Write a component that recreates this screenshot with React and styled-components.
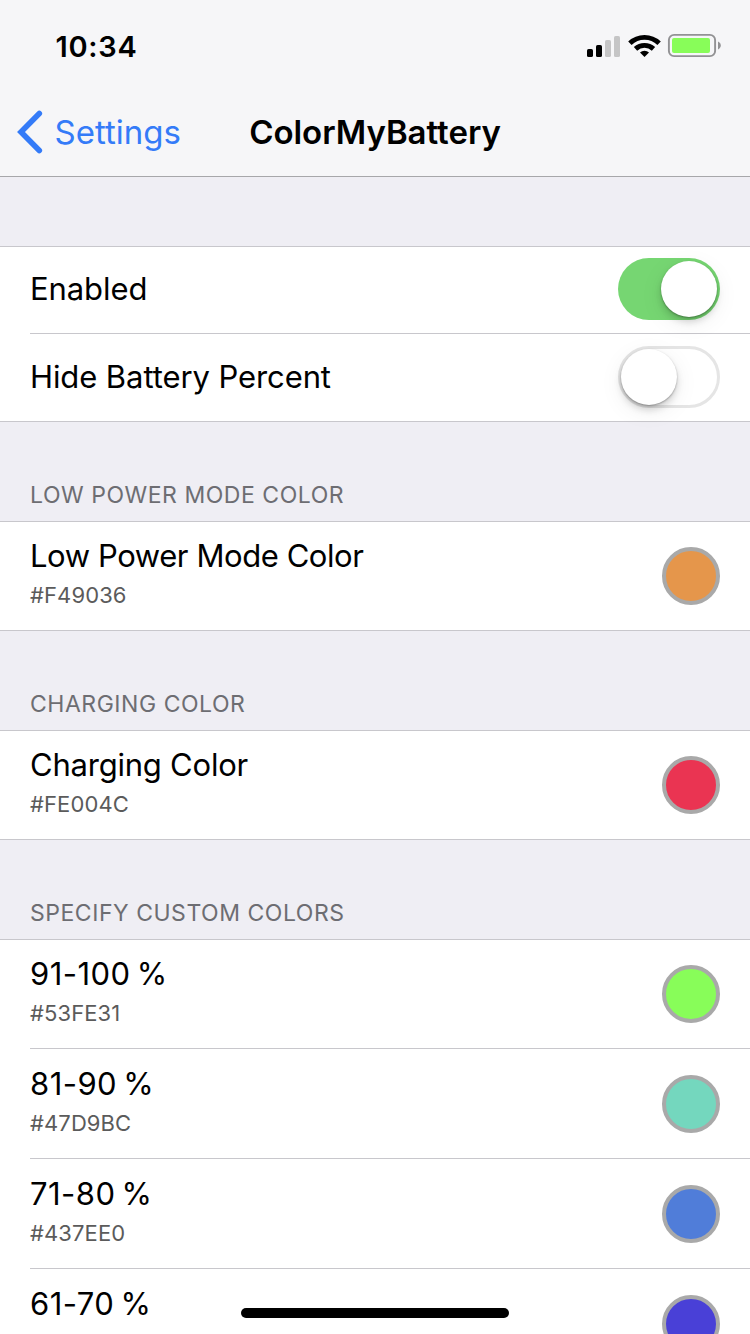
import React from "react";
import styled, { createGlobalStyle } from "styled-components";

const GlobalStyle = createGlobalStyle`
  *, *::before, *::after { box-sizing: border-box; }
  body {
    margin: 0;
    background: #efeef4;
    font-family: Inter, "Liberation Sans", sans-serif;
    color: #000;
  }
`;

const Screen = styled.main`
  position: relative;
  width: 750px;
  height: 1334px;
  overflow: hidden;
  background: #efeef4;
`;

const Header = styled.header`
  height: 177px;
  background: #f6f6f8;
  border-bottom: 1px solid #a7a7aa;
`;

const StatusBar = styled.div`
  display: flex;
  justify-content: space-between;
  height: 88px;
  padding: 0 28px 0 55.5px;
`;

const Clock = styled.time`
  padding-top: 29px;
  font-size: 29px;
  line-height: 36px;
  font-weight: 600;
  letter-spacing: 0.7px;
`;

const StatusIcons = styled.svg`
  width: 136px;
  height: 26px;
  margin-top: 33px;
`;

const NavBar = styled.nav`
  display: grid;
  grid-template-columns: 250px 250px 250px;
  height: 88px;
  align-items: center;
`;

const BackButton = styled.a`
  display: flex;
  align-items: center;
  padding-left: 17px;
  color: #347bf8;
  font-size: 33px;
  line-height: 40px;
  letter-spacing: 0;

  svg {
    width: 26px;
    height: 44px;
    margin-right: 11.5px;
  }
`;

const Title = styled.h1`
  justify-self: center;
  margin: 0;
  font-size: 33px;
  line-height: 40px;
  font-weight: 600;
  letter-spacing: -0.03px;
  white-space: nowrap;
`;

const SectionHeader = styled.h2`
  display: flex;
  align-items: flex-end;
  height: ${(p) => p.$height}px;
  margin: 0;
  padding: 0 30px 11px;
  font-size: 23px;
  line-height: 30px;
  font-weight: 400;
  letter-spacing: 0.53px;
  color: #6d6d72;
`;

const Group = styled.section`
  background: #fff;
  border-top: 1px solid #c8c7cc;
  border-bottom: 1px solid #c8c7cc;
`;

const Row = styled.div`
  display: flex;
  justify-content: space-between;
  height: ${(p) => p.$height}px;
  margin-left: 30px;
  padding-right: 30px;

  & + & { border-top: 1px solid #c8c7cc; }
`;

const SwitchRow = styled(Row)`
  align-items: center;
  padding-bottom: 2px;

  & + & { padding-bottom: 1px; }
`;

const ColorRow = styled(Row)`
  padding-top: 14px;

  & + & { padding-top: 15px; }
`;

const Label = styled.div`
  font-size: 31px;
  line-height: 40px;
  letter-spacing: ${(p) => p.$tracking ?? 0}px;
  word-spacing: ${(p) => p.$wordGap ?? 0}px;
  white-space: nowrap;
`;

const Hex = styled.div`
  margin-top: 4px;
  font-size: 22px;
  line-height: 30px;
  letter-spacing: 0.1px;
  color: #5b5b5b;
`;

const Swatch = styled.span`
  width: 58px;
  height: 58px;
  margin-top: 11px;
  border: 4px solid #a9a9a9;
  border-radius: 50%;
  background: ${(p) => p.$color};
`;

const Switch = styled.span`
  display: flex;
  justify-content: ${(p) => (p.$on ? "flex-end" : "flex-start")};
  width: 102px;
  height: 62px;
  padding: ${(p) => (p.$on ? "3px" : "0")};
  border: ${(p) => (p.$on ? "0" : "3px solid #e5e5e5")};
  border-radius: 31px;
  background: ${(p) => (p.$on ? "#76d672" : "#fff")};
`;

const Knob = styled.span`
  width: 56px;
  height: 56px;
  border-radius: 50%;
  background: #fff;
  box-shadow: 0 1px 2px rgba(0, 0, 0, 0.3), 0 5px 7px rgba(0, 0, 0, 0.15),
    0 6px 24px rgba(0, 0, 0, 0.07);
`;

const HomeIndicator = styled.div`
  position: absolute;
  left: 241px;
  bottom: 16px;
  width: 268px;
  height: 10px;
  border-radius: 5px;
  background: #000;
`;

const customColors = [
  { label: "91-100 %", hex: "#53FE31", color: "#88fd59" },
  { label: "81-90 %", hex: "#47D9BC", color: "#74d7be" },
  { label: "71-80 %", hex: "#437EE0", color: "#507dd9" },
  { label: "61-70 %", color: "#4940d7" },
];

function ColorSetting({ label, hex, color, height, tracking, wordGap }) {
  return (
    <ColorRow $height={height}>
      <div>
        <Label $tracking={tracking} $wordGap={wordGap}>{label}</Label>
        {hex && <Hex>{hex}</Hex>}
      </div>
      <Swatch $color={color} />
    </ColorRow>
  );
}

function SwitchSetting({ label, on, height }) {
  return (
    <SwitchRow $height={height}>
      <Label $tracking={-0.09}>{label}</Label>
      <Switch $on={on} role="switch" aria-checked={on}>
        <Knob />
      </Switch>
    </SwitchRow>
  );
}

export default function App() {
  return (
    <>
      <GlobalStyle />
      <Screen>
        <Header>
          <StatusBar>
            <Clock>10:34</Clock>
            <StatusIcons viewBox="586 33 136 26">
              <rect x="587" y="49" width="6" height="8" rx="1.6" />
              <rect x="596" y="45" width="6" height="12" rx="1.6" />
              <rect x="605" y="40" width="6" height="17" rx="1.6" fill="#c5c5c6" />
              <rect x="614" y="36" width="6" height="21" rx="1.6" fill="#c5c5c6" />
              <g fill="none" stroke="#000" strokeWidth="4.9">
                <path d="M629.9 43.2a21.2 21.2 0 0 1 29.2 0" />
                <path d="M635.5 48.9a13.2 13.2 0 0 1 18 0" />
              </g>
              <path d="M644.5 57l-4.5-4.4a6.500 6.500 0 0 1 9 0z" />
              <rect x="668.9" y="34.9" width="46.2" height="21.2" rx="5.2" fill="none" stroke="#929294" strokeWidth="1.9" />
              <rect x="672" y="38" width="38" height="15" rx="2" fill="#88fd59" />
              <path d="M718 41.6c1.7.7 2.8 2.1 2.8 3.9s-1.1 3.2-2.8 3.9z" fill="#929294" />
            </StatusIcons>
          </StatusBar>
          <NavBar>
            <BackButton>
              <svg viewBox="0 0 26 44" fill="none" stroke="currentColor" strokeWidth="5.6" strokeLinecap="round">
                <path d="M22.3 3.5L4 22L22.3 40.5" />
              </svg>
              Settings
            </BackButton>
            <Title>ColorMyBattery</Title>
          </NavBar>
        </Header>

        <SectionHeader $height={69} />
        <Group>
          <SwitchSetting label="Enabled" on height={86} />
          <SwitchSetting label="Hide Battery Percent" on={false} height={88} />
        </Group>

        <SectionHeader $height={99}>LOW POWER MODE COLOR</SectionHeader>
        <Group>
          <ColorSetting label="Low Power Mode Color" hex="#F49036" color="#e5964b" height={108} tracking={-0.42} />
        </Group>

        <SectionHeader $height={99}>CHARGING COLOR</SectionHeader>
        <Group>
          <ColorSetting label="Charging Color" hex="#FE004C" color="#ea3452" height={108} tracking={-0.22} />
        </Group>

        <SectionHeader $height={99}>SPECIFY CUSTOM COLORS</SectionHeader>
        <Group>
          {customColors.map((c, i) => (
            <ColorSetting
              key={c.label}
              {...c}
              height={i === 0 ? 108 : 110}
              tracking={0.45}
              wordGap={-3}
            />
          ))}
        </Group>
        <HomeIndicator />
      </Screen>
    </>
  );
}
